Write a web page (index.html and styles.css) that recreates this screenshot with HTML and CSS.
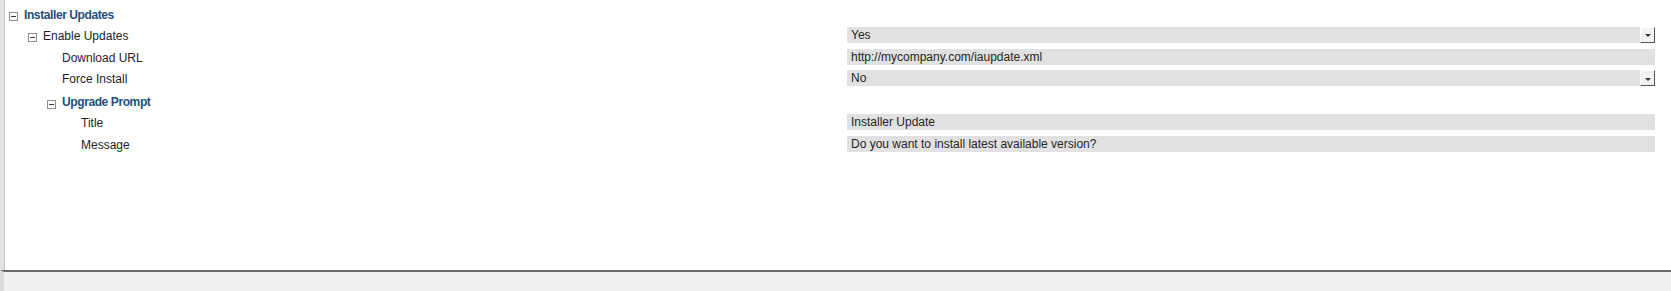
FILE: index.html
```html
<!DOCTYPE html>
<html lang="en">
<head>
  <meta charset="UTF-8" />
  <title>Installer Updates</title>
  <link rel="stylesheet" href="styles.css">
</head>
<body>
  <div class="panel">
    <div class="tree">
      <div class="row group lvl0">
        <div class="label"><span class="toggle"></span>Installer Updates</div>
      </div>
      <div class="row lvl1">
        <div class="label"><span class="toggle"></span>Enable Updates</div>
        <div class="value"><span>Yes</span><span class="drop"></span></div>
      </div>
      <div class="row leaf lvl2">
        <div class="label">Download URL</div>
        <div class="value"><span>http://mycompany.com/iaupdate.xml</span></div>
      </div>
      <div class="row leaf lvl2">
        <div class="label">Force Install</div>
        <div class="value"><span>No</span><span class="drop"></span></div>
      </div>
      <div class="row group lvl2">
        <div class="label"><span class="toggle"></span>Upgrade Prompt</div>
      </div>
      <div class="row leaf lvl3">
        <div class="label">Title</div>
        <div class="value"><span>Installer Update</span></div>
      </div>
      <div class="row leaf lvl3">
        <div class="label">Message</div>
        <div class="value"><span>Do you want to install latest available version?</span></div>
      </div>
    </div>
    <div class="status"></div>
  </div>
</body>
</html>
```

FILE: styles.css
```css
html, body {
  margin: 0;
  height: 100%;
  background: #ffffff;
}

body {
  font-family: "Liberation Sans", Arial, sans-serif;
  font-size: 12px;
  color: #1e1e1e;
}

.panel {
  height: 100vh;
  display: flex;
  flex-direction: column;
  border-left: 4px solid #e2e2e2;
  box-sizing: border-box;
}

.tree {
  flex: 1;
  border-left: 1px solid #c4c4c4;
  padding-top: 4px;
}

.row {
  display: flex;
  height: 21.8px;
}

.label {
  width: 842px;
  display: flex;
  align-items: center;
  line-height: 21.8px;
  white-space: nowrap;
  box-sizing: border-box;
}

/* tree indentation, 19px per level */
.lvl0 .label { padding-left: 4px; }
.lvl1 .label { padding-left: 23px; }
.lvl2 .label { padding-left: 42px; }
.lvl3 .label { padding-left: 61px; }
.leaf .label { padding-left: 57px; }
.leaf.lvl3 .label { padding-left: 76px; }

.group .label {
  font-weight: bold;
  font-size: 12px;
  letter-spacing: -0.4px;
  color: #1f4e79;
  padding-top: 2px;
}

.toggle {
  width: 7px;
  height: 7px;
  border: 1px solid #8e8e8e;
  background: #fff;
  margin-right: 6px;
  position: relative;
  flex-shrink: 0;
  margin-top: 2px;
}

.toggle::after {
  content: "";
  position: absolute;
  left: 1px;
  right: 1px;
  top: 3px;
  height: 1px;
  background: #3c3c3c;
}

.value {
  width: 808px;
  height: 16px;
  margin-top: 1px;
  background: #e1e1e1;
  display: flex;
  align-items: center;
  color: #262626;
}

.value span:first-child {
  flex: 1;
  padding-left: 4px;
  white-space: nowrap;
}

.drop {
  width: 13px;
  height: 14px;
  background: #f2f2f2;
  border-top: 1px solid #ffffff;
  border-left: 1px solid #ffffff;
  border-right: 1px solid #555555;
  border-bottom: 1px solid #555555;
  display: flex;
  align-items: center;
  justify-content: center;
}

.drop::after {
  content: "";
  width: 0;
  height: 0;
  margin-top: 2px;
  border-left: 3px solid transparent;
  border-right: 3px solid transparent;
  border-top: 3px solid #333333;
}

.status {
  height: 19px;
  background: #f0f0f0;
  border-top: 2px solid #6a6a6a;
  margin-left: -4px;
  border-left: 4px solid #dcdcdc;
}
```
